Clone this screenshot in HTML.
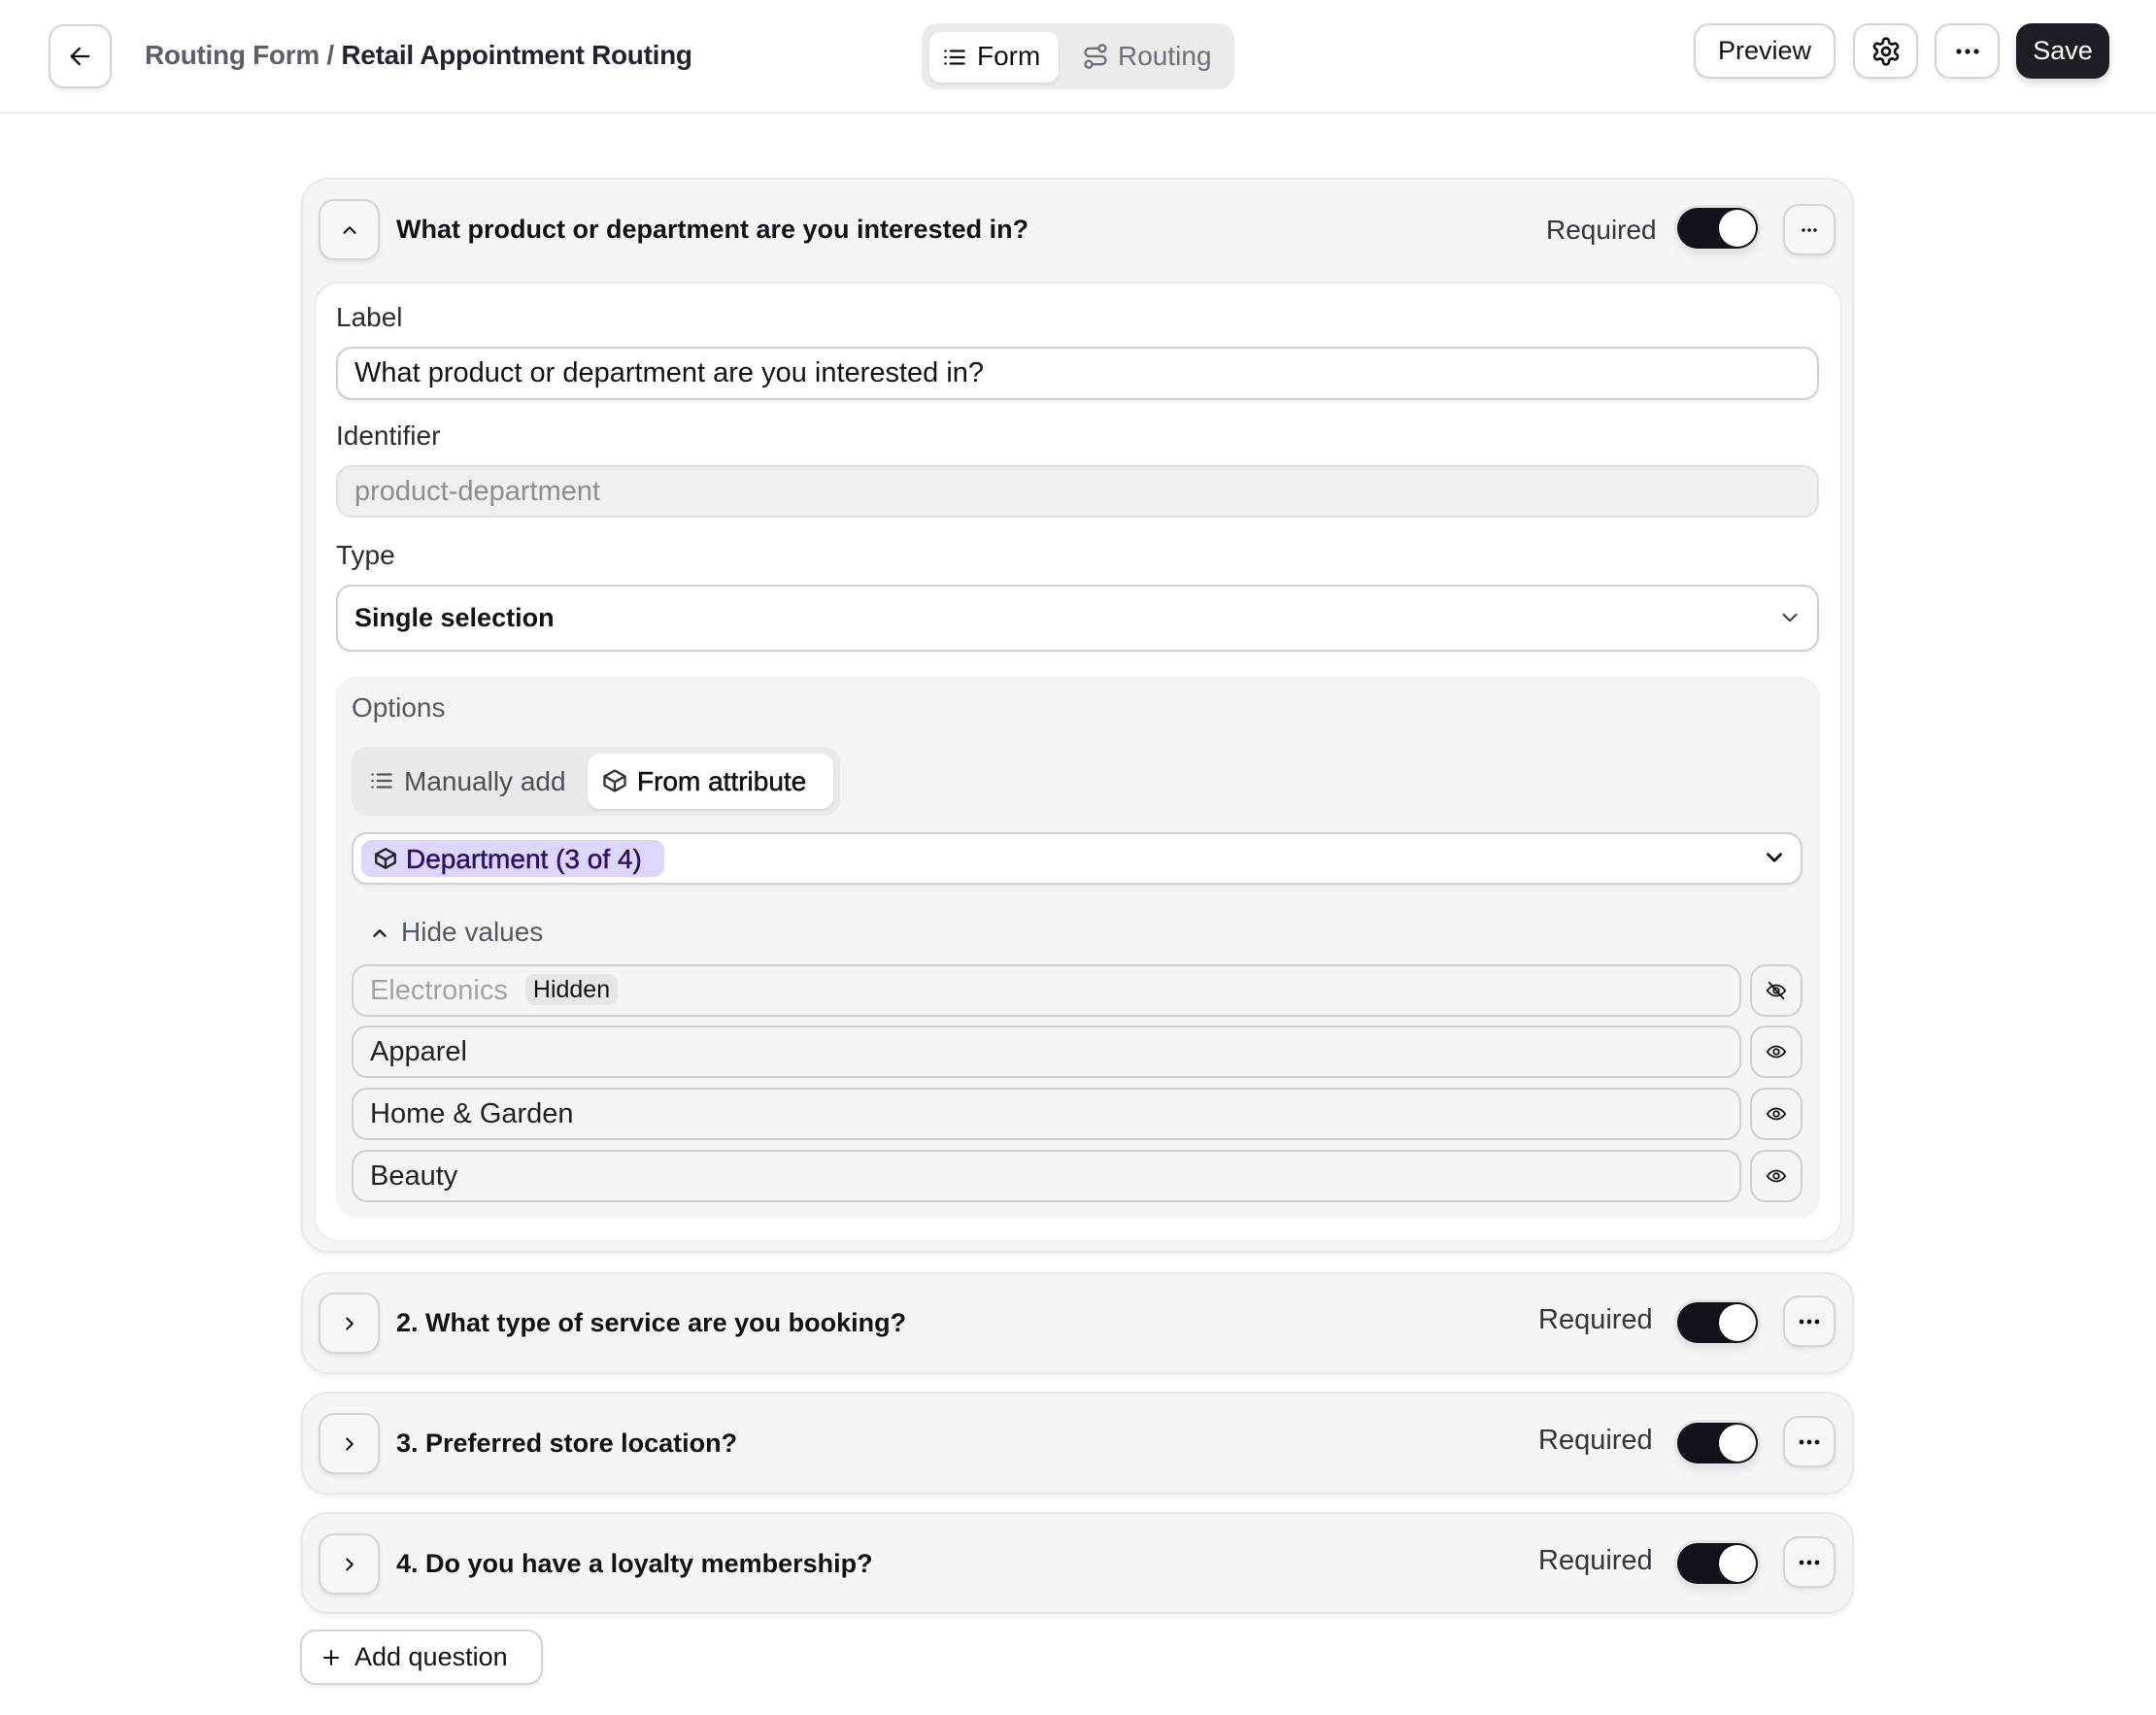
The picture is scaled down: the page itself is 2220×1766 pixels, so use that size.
<!DOCTYPE html>
<html><head><meta charset="utf-8"><style>
*{box-sizing:border-box;margin:0;padding:0}
body{width:2220px;height:1766px;background:#fff;font-family:"Liberation Sans",sans-serif;color:#111318;position:relative;overflow:hidden}
.a{position:absolute}
.btn{position:absolute;background:#fff;border:2px solid #d4d4d8;border-radius:16px;box-shadow:0 3px 5px rgba(0,0,0,.07);display:flex;align-items:center;justify-content:center}
.card{position:absolute;left:310px;width:1599px;background:#f5f5f5;border:2px solid #e8e8e8;border-radius:28px;box-shadow:0 3px 6px rgba(0,0,0,.06)}
.t{position:absolute;white-space:nowrap}
.tog{position:absolute;width:83px;height:42px;border-radius:21px;background:#111318;box-shadow:0 0 0 3px #e4e4e7, 0 6px 10px rgba(0,0,0,.1)}
.tog:after{content:"";position:absolute;right:2px;top:2px;width:38px;height:38px;border-radius:50%;background:#fff}
.inp{position:absolute;border:2px solid #d0d0d4;border-radius:16px;background:#fff;box-shadow:0 2px 3px rgba(0,0,0,.05)}
.row{position:absolute;left:362px;width:1431px;height:54px;border:2px solid #d0d0d4;border-radius:16px;background:#f5f5f5;font-size:29px;padding-left:17px;line-height:50px;color:#222}
.eye{position:absolute;left:1802px;width:54px;height:54px;border:2px solid #d0d0d4;border-radius:16px;background:#f5f5f5;display:flex;align-items:center;justify-content:center}
</style></head><body>
<div class="btn" style="left:50px;top:25px;width:65px;height:66px"><svg width="28" height="28" viewBox="0 0 24 24" fill="none" stroke="#111" stroke-width="2" stroke-linecap="round" stroke-linejoin="round"><path d="M19 12H5M11 5l-7 7 7 7"/></svg></div>
<div class="t" style="left:149px;top:41px;font-size:28px;font-weight:bold;letter-spacing:-0.3px"><span style="color:#5b5f6a">Routing Form /</span> <span style="color:#1f2430">Retail Appointment Routing</span></div>
<div class="a" style="left:949px;top:24px;width:322px;height:68px;background:#ebebeb;border-radius:16px"></div>
<div class="a" style="left:957px;top:33px;width:133px;height:52px;background:#fff;border-radius:12px;box-shadow:0 2px 3px rgba(0,0,0,.08)"></div>
<svg class="a" style="left:970px;top:46px" width="26" height="26" viewBox="0 0 24 24" fill="none" stroke="#111" stroke-width="2" stroke-linecap="round"><path d="M8 6h13M8 12h13M8 18h13M3 6h.5M3 12h.5M3 18h.5"/></svg>
<div class="t" style="left:1006px;top:42px;font-size:28px;color:#111">Form</div>
<svg class="a" style="left:1114px;top:44px" width="28" height="28" viewBox="0 0 24 24" fill="none" stroke="#6b6f78" stroke-width="2" stroke-linecap="round"><circle cx="6" cy="19" r="3"/><circle cx="18" cy="5" r="3"/><path d="M9 19h8.5a3.5 3.5 0 0 0 0-7h-11a3.5 3.5 0 0 1 0-7H15"/></svg>
<div class="t" style="left:1151px;top:42px;font-size:28px;color:#6b6f78">Routing</div>
<div class="btn" style="left:1744px;top:24px;width:146px;height:57px;font-size:27px">Preview</div>
<div class="btn" style="left:1908px;top:24px;width:67px;height:57px"><svg width="32" height="32" viewBox="0 0 24 24" fill="none" stroke="#111" stroke-width="2" stroke-linejoin="round"><path d="M12.22 2h-.44a2 2 0 0 0-2 2v.18a2 2 0 0 1-1 1.73l-.43.25a2 2 0 0 1-2 0l-.15-.08a2 2 0 0 0-2.73.73l-.22.38a2 2 0 0 0 .73 2.73l.15.1a2 2 0 0 1 1 1.72v.51a2 2 0 0 1-1 1.740l-.15.09a2 2 0 0 0-.73 2.73l.22.38a2 2 0 0 0 2.73.73l.15-.08a2 2 0 0 1 2 0l.43.25a2 2 0 0 1 1 1.73V20a2 2 0 0 0 2 2h.44a2 2 0 0 0 2-2v-.18a2 2 0 0 1 1-1.73l.43-.25a2 2 0 0 1 2 0l.15.08a2 2 0 0 0 2.73-.73l.22-.39a2 2 0 0 0-.73-2.73l-.15-.08a2 2 0 0 1-1-1.74v-.5a2 2 0 0 1 1-1.74l.15-.09a2 2 0 0 0 .73-2.73l-.22-.38a2 2 0 0 0-2.73-.73l-.15.08a2 2 0 0 1-2 0l-.43-.25a2 2 0 0 1-1-1.73V4a2 2 0 0 0-2-2z"/><circle cx="12" cy="12" r="3"/></svg></div>
<div class="btn" style="left:1992px;top:24px;width:67px;height:57px"><svg width="28" height="8" viewBox="0 0 28 8" fill="#111"><circle cx="5" cy="4" r="2.6"/><circle cx="14" cy="4" r="2.6"/><circle cx="23" cy="4" r="2.6"/></svg></div>
<div class="a" style="left:2076px;top:24px;width:96px;height:57px;background:#1c1e24;border-radius:16px;color:#fff;font-size:27px;display:flex;align-items:center;justify-content:center;box-shadow:0 5px 8px rgba(0,0,0,.15)">Save</div>
<div class="a" style="left:0;top:115px;width:2220px;height:2px;background:#ececec"></div>

<div class="card" style="top:183px;height:1107px"></div>
<div class="btn" style="left:328px;top:205px;width:63px;height:63px;background:#f7f7f7"><svg width="22" height="22" viewBox="0 0 24 24" fill="none" stroke="#111" stroke-width="2.2" stroke-linecap="round" stroke-linejoin="round"><path d="M6 15l6-6 6 6"/></svg></div>
<div class="t" style="left:408px;top:221px;font-size:27px;font-weight:bold;color:#111318">What product or department are you interested in?</div>
<div class="t" style="left:1592px;top:221px;font-size:28px;color:#33363d">Required</div>
<div class="tog" style="left:1727px;top:214px"></div>
<div class="btn" style="left:1836px;top:210px;width:54px;height:53px;background:#f7f7f7"><svg width="18" height="6" viewBox="0 0 18 6" fill="#111"><circle cx="3" cy="3" r="1.7"/><circle cx="9" cy="3" r="1.7"/><circle cx="15" cy="3" r="1.7"/></svg></div>

<div class="a" style="left:323px;top:290px;width:1574px;height:989px;background:#fff;border:2px solid #ececec;border-radius:26px"></div>
<div class="t" style="left:346px;top:311px;font-size:28px;color:#2a2d34">Label</div>
<div class="inp" style="left:346px;top:357px;width:1527px;height:55px;font-size:29px;padding-left:17px;line-height:50px">What product or department are you interested in?</div>
<div class="t" style="left:346px;top:433px;font-size:28px;color:#2a2d34">Identifier</div>
<div class="inp" style="left:346px;top:479px;width:1527px;height:54px;background:#efefef;border-color:#e0e0e0;font-size:29px;padding-left:17px;line-height:50px;color:#8a8d94;box-shadow:none">product-department</div>
<div class="t" style="left:346px;top:556px;font-size:28px;color:#2a2d34">Type</div>
<div class="inp" style="left:346px;top:602px;width:1527px;height:69px;font-size:27px;font-weight:bold;padding-left:17px;line-height:65px">Single selection</div>
<svg class="a" style="left:1830px;top:623px" width="26" height="26" viewBox="0 0 24 24" fill="none" stroke="#444" stroke-width="2" stroke-linecap="round" stroke-linejoin="round"><path d="M6 9l6 6 6-6"/></svg>

<div class="a" style="left:346px;top:697px;width:1528px;height:557px;background:#f4f4f4;border-radius:20px"></div>
<div class="t" style="left:362px;top:713px;font-size:28px;color:#555962">Options</div>
<div class="a" style="left:362px;top:769px;width:503px;height:71px;background:#e9e9e9;border-radius:16px"></div>
<svg class="a" style="left:380px;top:791px" width="26" height="26" viewBox="0 0 24 24" fill="none" stroke="#555" stroke-width="2" stroke-linecap="round"><path d="M8 6h13M8 12h13M8 18h13M3 6h.5M3 12h.5M3 18h.5"/></svg>
<div class="t" style="left:416px;top:789px;font-size:28px;color:#4b4f58">Manually add</div>
<div class="a" style="left:605px;top:776px;width:253px;height:57px;background:#fff;border-radius:13px;box-shadow:0 2px 3px rgba(0,0,0,.08)"></div>
<svg class="a" style="left:619px;top:790px" width="28" height="28" viewBox="0 0 24 24" fill="none" stroke="#333" stroke-width="2" stroke-linejoin="round"><path d="M21 8l-9-5-9 5v8l9 5 9-5z"/><path d="M3 8l9 5 9-5M12 13v8"/></svg>
<div class="t" style="left:656px;top:789px;font-size:28px;color:#111;-webkit-text-stroke:0.5px #111">From attribute</div>

<div class="inp" style="left:362px;top:857px;width:1494px;height:54px"></div>
<div class="a" style="left:372px;top:865px;width:312px;height:38px;background:#ddd6fe;border-radius:11px"></div>
<svg class="a" style="left:384px;top:871px" width="26" height="26" viewBox="0 0 24 24" fill="none" stroke="#222" stroke-width="2.2" stroke-linejoin="round"><path d="M21 8l-9-5-9 5v8l9 5 9-5z"/><path d="M3 8l9 5 9-5M12 13v8"/></svg>
<div class="t" style="left:418px;top:869px;font-size:28px;color:#2e1065;-webkit-text-stroke:0.5px #2e1065">Department (3 of 4)</div>
<svg class="a" style="left:1814px;top:870px" width="26" height="26" viewBox="0 0 24 24" fill="none" stroke="#111" stroke-width="2.6" stroke-linecap="round" stroke-linejoin="round"><path d="M6 9l6 6 6-6"/></svg>

<svg class="a" style="left:380px;top:950px" width="22" height="22" viewBox="0 0 24 24" fill="none" stroke="#222" stroke-width="2.6" stroke-linecap="round" stroke-linejoin="round"><path d="M6 15l6-6 6 6"/></svg>
<div class="t" style="left:413px;top:944px;font-size:28px;color:#555962">Hide values</div>

<div class="row" style="top:993px;color:#a0a3a9">Electronics <span style="display:inline-block;background:#e6e6e6;color:#111;font-size:25px;line-height:32px;padding:0 8px;border-radius:9px;margin-left:10px;vertical-align:2px">Hidden</span></div>
<div class="row" style="top:1056px">Apparel</div>
<div class="row" style="top:1120px">Home &amp; Garden</div>
<div class="row" style="top:1184px">Beauty</div>
<div class="eye" style="top:993px"><svg width="22" height="22" viewBox="0 0 24 24" fill="none" stroke="#111" stroke-width="2" stroke-linecap="round"><path d="M2 12s3.5-6 10-6 10 6 10 6-3.5 6-10 6S2 12 2 12z"/><circle cx="12" cy="12" r="3"/><path d="M4 3l16 18"/></svg></div>
<div class="eye" style="top:1056px"><svg width="22" height="22" viewBox="0 0 24 24" fill="none" stroke="#111" stroke-width="2"><path d="M2 12s3.5-6 10-6 10 6 10 6-3.5 6-10 6S2 12 2 12z"/><circle cx="12" cy="12" r="3"/></svg></div>
<div class="eye" style="top:1120px"><svg width="22" height="22" viewBox="0 0 24 24" fill="none" stroke="#111" stroke-width="2"><path d="M2 12s3.5-6 10-6 10 6 10 6-3.5 6-10 6S2 12 2 12z"/><circle cx="12" cy="12" r="3"/></svg></div>
<div class="eye" style="top:1184px"><svg width="22" height="22" viewBox="0 0 24 24" fill="none" stroke="#111" stroke-width="2"><path d="M2 12s3.5-6 10-6 10 6 10 6-3.5 6-10 6S2 12 2 12z"/><circle cx="12" cy="12" r="3"/></svg></div>

<div class="card" style="top:1310px;height:105px"></div>
<div class="btn" style="left:328px;top:1331px;width:63px;height:63px;background:#f7f7f7"><svg width="22" height="22" viewBox="0 0 24 24" fill="none" stroke="#111" stroke-width="2.2" stroke-linecap="round" stroke-linejoin="round"><path d="M9 6l6 6-6 6"/></svg></div>
<div class="t" style="left:408px;top:1347px;font-size:27px;font-weight:bold">2. What type of service are you booking?</div>
<div class="t" style="left:1584px;top:1343px;font-size:29px;color:#33363d">Required</div>
<div class="tog" style="left:1727px;top:1341px"></div>
<div class="btn" style="left:1836px;top:1334px;width:54px;height:53px;background:#f7f7f7"><svg width="24" height="8" viewBox="0 0 24 8" fill="#111"><circle cx="4" cy="4" r="2.4"/><circle cx="12" cy="4" r="2.4"/><circle cx="20" cy="4" r="2.4"/></svg></div>

<div class="card" style="top:1433px;height:106px"></div>
<div class="btn" style="left:328px;top:1455px;width:63px;height:63px;background:#f7f7f7"><svg width="22" height="22" viewBox="0 0 24 24" fill="none" stroke="#111" stroke-width="2.2" stroke-linecap="round" stroke-linejoin="round"><path d="M9 6l6 6-6 6"/></svg></div>
<div class="t" style="left:408px;top:1471px;font-size:27px;font-weight:bold">3. Preferred store location?</div>
<div class="t" style="left:1584px;top:1467px;font-size:29px;color:#33363d">Required</div>
<div class="tog" style="left:1727px;top:1465px"></div>
<div class="btn" style="left:1836px;top:1458px;width:54px;height:53px;background:#f7f7f7"><svg width="24" height="8" viewBox="0 0 24 8" fill="#111"><circle cx="4" cy="4" r="2.4"/><circle cx="12" cy="4" r="2.4"/><circle cx="20" cy="4" r="2.4"/></svg></div>

<div class="card" style="top:1557px;height:105px"></div>
<div class="btn" style="left:328px;top:1579px;width:63px;height:63px;background:#f7f7f7"><svg width="22" height="22" viewBox="0 0 24 24" fill="none" stroke="#111" stroke-width="2.2" stroke-linecap="round" stroke-linejoin="round"><path d="M9 6l6 6-6 6"/></svg></div>
<div class="t" style="left:408px;top:1595px;font-size:27px;font-weight:bold">4. Do you have a loyalty membership?</div>
<div class="t" style="left:1584px;top:1591px;font-size:29px;color:#33363d">Required</div>
<div class="tog" style="left:1727px;top:1589px"></div>
<div class="btn" style="left:1836px;top:1582px;width:54px;height:53px;background:#f7f7f7"><svg width="24" height="8" viewBox="0 0 24 8" fill="#111"><circle cx="4" cy="4" r="2.4"/><circle cx="12" cy="4" r="2.4"/><circle cx="20" cy="4" r="2.4"/></svg></div>

<div class="btn" style="left:309px;top:1678px;width:250px;height:57px;font-size:27px;justify-content:flex-start;padding-left:18px"><svg width="24" height="24" viewBox="0 0 24 24" fill="none" stroke="#111" stroke-width="2" stroke-linecap="round" style="margin-right:12px"><path d="M12 5v14M5 12h14"/></svg>Add question</div>
</body></html>
